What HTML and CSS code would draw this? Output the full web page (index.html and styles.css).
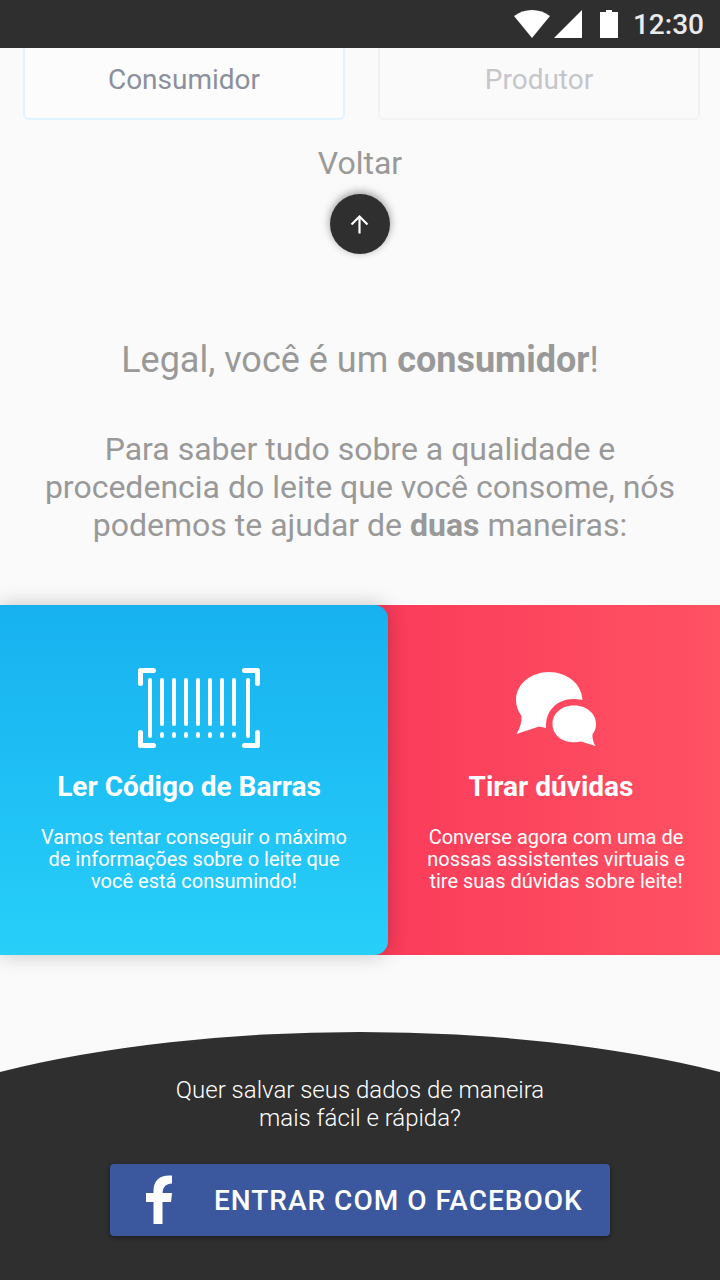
FILE: index.html
```html
<!DOCTYPE html>
<html lang="pt-BR">
<head>
<meta charset="utf-8">
<meta name="viewport" content="width=device-width, initial-scale=1">
<title>Consumidor</title>
<link rel="stylesheet" href="styles.css">
</head>
<body>
<header class="status-bar">
  <svg class="status-icons" width="104" height="28" viewBox="0 0 104 28" fill="#fff" aria-hidden="true">
    <path d="M0 6Q8 0 18 0T36 6L18 28Z"/>
    <path d="M40 28L68 0V28Z"/>
    <path d="M86 2H92V0H98V2H104V28H86Z"/>
  </svg>
  <time class="clock">12:30</time>
</header>
<main class="content">
  <div class="profiles">
    <button class="profile profile-active" type="button">Consumidor</button>
    <button class="profile" type="button">Produtor</button>
  </div>
  <div class="back">
    <label class="back-label" for="back">Voltar</label>
    <button class="back-button" id="back" type="button">
      <svg width="20" height="20" viewBox="0 0 20 20" fill="none" stroke="#fff" stroke-width="2.200" aria-hidden="true"><path d="M9.500 19.500V3M1.500 10.500L9.500 2.500L17.500 10.500"/></svg>
    </button>
  </div>
  <section class="intro">
    <h1 class="intro-title">Legal, você é um <strong>consumidor</strong>!</h1>
    <p class="intro-text">Para saber tudo sobre a qualidade e<br>procedencia do leite que você consome, nós<br>podemos te ajudar de <strong>duas</strong> maneiras:</p>
  </section>
  <section class="options">
    <a class="option option-scan" href="#barras">
      <svg class="option-icon" width="122" height="80" viewBox="0 0 122 80" fill="none" stroke="#fff" stroke-linecap="round" aria-hidden="true">
        <path stroke-width="5" stroke-linejoin="round" d="M2.500 15.500V2.500H15.500M106.500 2.500H119.500V15.500M2.500 64.500V77.500H15.500M106.500 77.500H119.500V64.500"/>
        <path stroke-width="4" d="M12 12V68M24 12V56M36 12V56M48 12V56M60 12V56M72 12V56M84 12V56M96 12V56M110 12V68M24 66V68M36 66V68M48 66V68M60 66V68M72 66V68M84 66V68M96 66V68"/>
      </svg>
      <h2 class="option-title">Ler Código de Barras</h2>
      <p class="option-text">Vamos tentar conseguir o máximo<br>de informações sobre o leite que<br>você está consumindo!</p>
    </a>
    <a class="option option-chat" href="#duvidas">
      <svg class="option-icon" width="80" height="80" viewBox="0 0 80 80" fill="#fff" aria-hidden="true">
        <path d="M0 32C0 16 15 4 33 4C51 4 66 16 66.500 32C45 27 29 40 30 60L23 58.500L0.500 66C4 60 6 54 5.500 48C2 43 0 38 0 32Z"/>
        <path d="M58 37.500C70 37.500 80 45 80 56C80 60 79 63.500 76.500 66C76 70 77.500 75 79.500 78L65 73.500C50 77 36.500 69 36.500 56C36.500 45 46 37.500 58 37.500Z"/>
      </svg>
      <h2 class="option-title">Tirar dúvidas</h2>
      <p class="option-text">Converse agora com uma de<br>nossas assistentes virtuais e<br>tire suas dúvidas sobre leite!</p>
    </a>
  </section>
</main>
<footer class="footer">
  <svg class="footer-curve" viewBox="0 0 720 40" preserveAspectRatio="none" aria-hidden="true"><path fill="#2f2f2f" d="M0 40A600 200 0 0 1 720 40Z"/></svg>
  <div class="footer-body">
    <p class="footer-text">Quer salvar seus dados de maneira<br>mais fácil e rápida?</p>
    <button class="facebook" type="button">
      <svg class="facebook-icon" width="28" height="50" viewBox="0 0 28 50" fill="#fff" aria-hidden="true"><path d="M7.500 49V27H0V18H7.500V16C7.500 5 14 -0.500 26 0.500V8.500C20 8.500 17 12 16.500 18H26L25 27H16.500V49Z"/></svg>
      <span class="facebook-label">ENTRAR COM O FACEBOOK</span>
    </button>
  </div>
</footer>
</body>
</html>
```
FILE: styles.css
```css
* {
  box-sizing: border-box;
}

body {
  margin: 0;
  min-height: 100vh;
  display: flex;
  flex-direction: column;
  background: #fafafa;
  color: #999;
  font-family: Roboto, "Noto Sans", sans-serif;
}

h1, h2, p {
  margin: 0;
  font-weight: 400;
}

button {
  border: 0;
  padding: 0;
  font: inherit;
  cursor: pointer;
}

.status-bar {
  height: 48px;
  padding: 0 16px;
  display: flex;
  align-items: center;
  justify-content: flex-end;
  gap: 15px;
  background: #2f2f2f;
}

.clock {
  color: #eaeaea;
  font-size: 28px;
  font-weight: 500;
}

.profiles {
  display: grid;
  grid-template-columns: 1fr 1fr;
  gap: 33px;
  padding: 0 20px 0 23px;
}

.profile {
  height: 72px;
  padding-bottom: 8px;
  border: 2px solid #f2f2f2;
  border-top: 0;
  border-radius: 0 0 6px 6px;
  background: #fafafa;
  color: #c5c5cb;
  font-size: 28px;
}

.profile-active {
  border-color: #e0f4ff;
  background: #fcfcfc;
  color: #8b909c;
}

.back {
  display: flex;
  flex-direction: column;
  align-items: center;
  gap: 12px;
  padding-top: 24px;
}

.back-label {
  font-size: 32px;
  line-height: 38px;
}

.back-button {
  display: grid;
  place-items: center;
  width: 60px;
  height: 60px;
  border-radius: 50%;
  background: #2f2f2f;
  box-shadow: 0 -2px 8px rgba(0, 0, 0, 0.4);
}

.intro {
  padding: 84px 16px 61px;
  text-align: center;
}

.intro-title {
  font-size: 36px;
  line-height: 44px;
}

.intro-text {
  margin-top: 48px;
  font-size: 32px;
  line-height: 38px;
}

.options {
  display: grid;
  grid-template-columns: 388fr 332fr;
  background: linear-gradient(90deg, #fa3c5a 54%, #ff5263);
}

.option {
  display: flex;
  flex-direction: column;
  align-items: center;
  min-height: 350px;
  padding: 63px 0 60px;
  color: #fff;
  text-align: center;
  text-decoration: none;
}

.option-scan {
  position: relative;
  border-radius: 0 14px 14px 0;
  background: linear-gradient(#17b1f0, #27cff9);
  box-shadow: 0 0 20px rgba(0, 0, 0, 0.22);
}

.option-chat {
  padding-left: 4px;
}

.option-scan .option-icon {
  margin-left: 10px;
}

.option-title {
  margin: 22px 10px 0 0;
  font-size: 28px;
  font-weight: 700;
  line-height: 34px;
}

.option-text {
  margin-top: 22px;
  font-size: 20px;
  line-height: 22px;
}

.footer {
  margin-top: auto;
  display: flex;
  flex-direction: column;
}

.footer-curve {
  display: block;
  width: 100%;
  height: 40px;
}

.footer-body {
  display: flex;
  flex-direction: column;
  align-items: center;
  gap: 32px;
  padding: 4px 16px 44px;
  background: #2f2f2f;
}

.footer-text {
  color: #fff;
  font-size: 24px;
  font-weight: 300;
  line-height: 28px;
  text-align: center;
}

.facebook {
  display: flex;
  align-items: center;
  gap: 40px;
  width: 100%;
  max-width: 500px;
  height: 72px;
  padding: 0 28px 0 36px;
  border-radius: 4px;
  background: #3b579d;
  box-shadow: 0 2px 5px rgba(0, 0, 0, 0.4);
  color: #fff;
}

.facebook-icon {
  flex: none;
}

.facebook-label {
  font-size: 28px;
  font-weight: 500;
  letter-spacing: 1px;
  white-space: nowrap;
}
```
